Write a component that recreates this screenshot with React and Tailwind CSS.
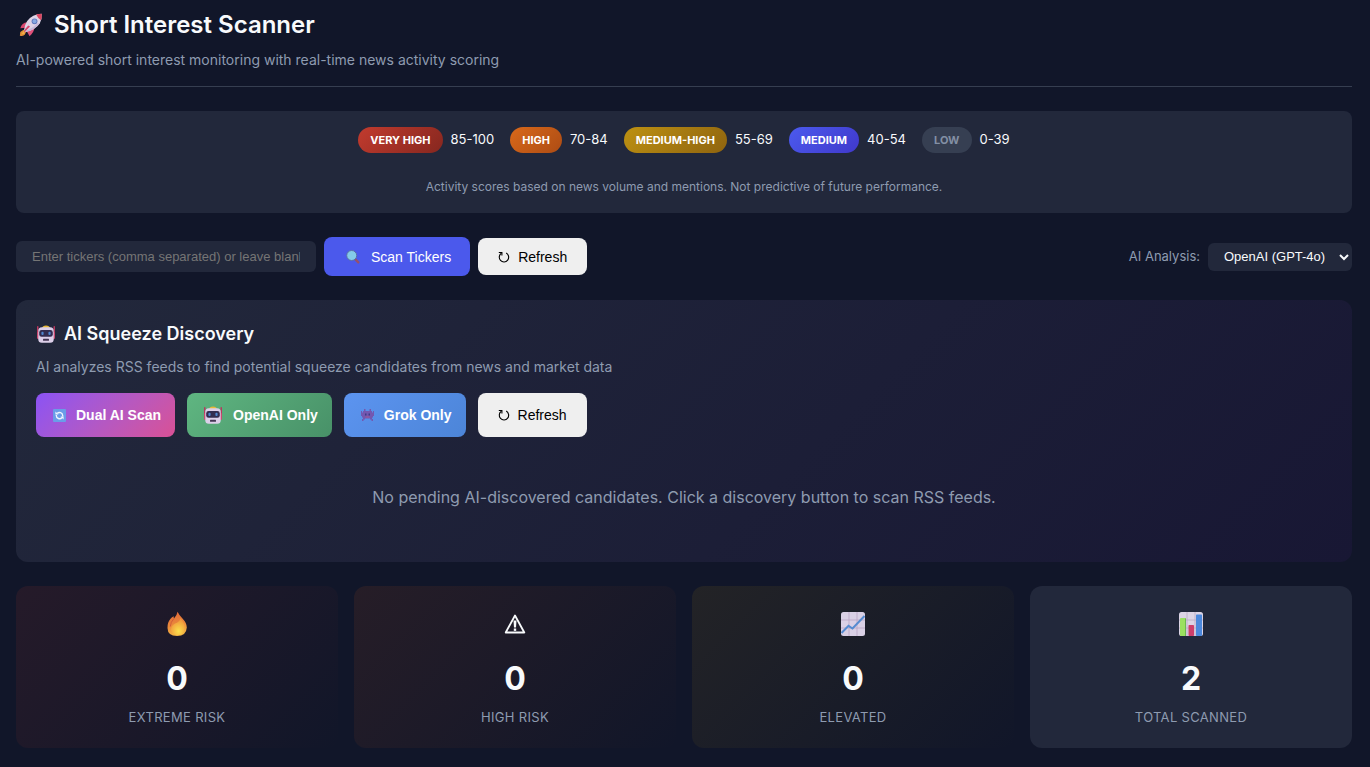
import React, { useState } from "react";

const legend = [
  { label: "VERY HIGH", range: "85-100", style: "bg-linear-135 from-[#c23b2e] to-[#86271f] text-white" },
  { label: "HIGH", range: "70-84", style: "bg-linear-135 from-[#d9691a] to-[#ad4c14] text-white" },
  { label: "MEDIUM-HIGH", range: "55-69", style: "bg-linear-135 from-[#bd9112] to-[#8f640f] text-white" },
  { label: "MEDIUM", range: "40-54", style: "bg-linear-135 from-[#4b5aee] to-[#4038cb] text-white" },
  { label: "LOW", range: "0-39", style: "bg-[#363f52] text-[#8390a5]" },
];

function RocketIcon({ className }) {
  return (
    <svg viewBox="0 0 28 28" className={className} aria-hidden="true">
      <path d="M6 19 L2.500 21.500 L2 25.500 Q6 26.500 7.500 24 L9 21Z" fill="#e39136" />
      <path d="M4 23.500 L7 20 L7 23.500Z" fill="#f5bd4d" />
      <path d="M10 11 Q4 11.500 2.500 17.500 L8.500 17Z" fill="#d9476f" />
      <path d="M17.500 16.500 Q17.500 22 12.500 26 L9 20Z" fill="#e0507a" />
      <path d="M6.500 19.500 Q7.500 8.500 16.500 4 Q21 2 25.500 2 Q26 7.500 23.500 12 Q18.500 19.500 8.500 21.500Z" fill="#ddd3e6" />
      <path d="M9 21.200 Q18.500 19 23.500 12 L21 12 Q15 18 7.500 20.500Z" fill="#c6b8d8" />
      <path d="M19.500 2.700 Q22 2 25.500 2 Q26 5.500 24.800 9 Q21.500 7 19.500 2.700Z" fill="#db4660" />
      <circle cx="17.800" cy="10" r="3.100" fill="#5f78bd" />
      <circle cx="17.800" cy="10" r="2.100" fill="#86a9e2" />
      <path d="M13 15.500 L6 22.500 Q7.500 17.500 11 14.500Z" fill="#d8446d" />
    </svg>
  );
}

function RobotIcon({ className }) {
  return (
    <svg viewBox="0 0 20 20" className={className} aria-hidden="true">
      <rect x="1" y="2" width="1.500" height="11" rx=".7" fill="#b9385f" />
      <rect x="17.500" y="2" width="1.500" height="11" rx=".7" fill="#b9385f" />
      <rect x="1" y="8" width="3" height="7" rx="1.200" fill="#c94b72" />
      <rect x="16" y="8" width="3" height="7" rx="1.200" fill="#c94b72" />
      <path d="M6 4 Q6.500 1.500 10 1.500 Q13.500 1.500 14 4Z" fill="#e6b93a" />
      <rect x="2.300" y="3.300" width="15.400" height="15.500" rx="3.500" fill="#dccfe9" />
      <rect x="3.200" y="6" width="13.600" height="6.800" rx="2.400" fill="#322c50" />
      <rect x="5.400" y="7.700" width="2.200" height="3.400" rx="1" fill="#4f86cf" />
      <rect x="12.400" y="7.700" width="2.200" height="3.400" rx="1" fill="#4f86cf" />
      <rect x="7" y="14.700" width="6" height="2" rx=".5" fill="#433553" />
    </svg>
  );
}

function SearchIcon({ className }) {
  return (
    <svg viewBox="0 0 20 20" className={className} aria-hidden="true">
      <path d="M12 12 L15.300 15.300" stroke="#96506c" strokeWidth="2.400" strokeLinecap="round" />
      <circle cx="8.700" cy="8.500" r="5" fill="#84cbe9" stroke="#5a70a8" strokeWidth="1" />
    </svg>
  );
}

function RefreshIcon({ className }) {
  return (
    <svg viewBox="0 0 12 12" className={className} fill="none" stroke="currentColor" aria-hidden="true">
      <path d="M8.200 2.100 A4.700 4.700 0 1 1 3.400 2.300" strokeWidth="1.100" />
      <path d="M.8 1.500 H3.900 V4.600" strokeWidth="1.100" />
    </svg>
  );
}

function SyncIcon({ className }) {
  return (
    <svg viewBox="0 0 18 18" className={className} fill="none" aria-hidden="true">
      <rect x="3" y="3" width="13" height="13" rx="1" fill="#6a9de8" />
      <path d="M6.300 9 V9.500 A3.200 3.200 0 0 0 12 11.500 M12.700 10.500 V9.500 A3.200 3.200 0 0 0 7.200 7.500" stroke="#eef4ff" strokeWidth="1.400" />
      <path d="M5.400 5.600 V8.600 H8.500Z M13.600 13.400 V10.400 H10.500Z" fill="#eef4ff" />
    </svg>
  );
}

function AlienIcon({ className }) {
  return (
    <svg viewBox="0 0 18 18" className={className} aria-hidden="true">
      <path
        d="M6 3H7.500V5H11.500V3H13V5H14V6.500H15V5H16V10H15V11.500H14V13H15V15H13.500V13.500H12V12.500H7V13.500H5.500V15H4V13H5V11.500H4V10H3V5H4V6.500H5V5H6Z"
        fill="#7357b0"
      />
      <path d="M7 7.500h1.500v2H7ZM10.500 7.500H12v2H10.500Z" fill="#3e3d86" />
      <path d="M7.500 10.500H11.500V11.500H7.500Z" fill="#a4588f" />
    </svg>
  );
}

function FireIcon({ className }) {
  return (
    <svg viewBox="0 0 26 26" className={className} aria-hidden="true">
      <defs>
        <linearGradient id="flame" x1="0" y1="0" x2="0.2" y2="1">
          <stop offset="0" stopColor="#e0633a" />
          <stop offset="0.6" stopColor="#ea8a3b" />
          <stop offset="1" stopColor="#f2b342" />
        </linearGradient>
        <radialGradient id="core" cx="0.55" cy="0.75" r="0.65">
          <stop offset="0" stopColor="#fbdf4c" />
          <stop offset="1" stopColor="#f09a3c" />
        </radialGradient>
      </defs>
      <path
        d="M13.500 .8 Q15 4 18.500 7.500 Q22.800 12 22.800 16.500 Q22.300 25 13 25 Q3.700 25 3.500 17 Q3.300 11.500 6.300 8 Q8 6 9.800 5.300 Q9.500 6.500 10 7.500 Q13 4.500 13.500 .8Z"
        fill="url(#flame)"
      />
      <path d="M16.500 7.500 Q21 12 20.700 17.500 Q20 24.300 13.500 24.300 Q7.300 24 7 18.500 Q7.200 14.500 11 12.500 Q15.500 11 16.500 7.500Z" fill="url(#core)" />
      <path d="M10 7.500 Q6.500 11 6.300 15.500" stroke="#cf5838" strokeWidth=".9" fill="none" />
    </svg>
  );
}

function WarningIcon({ className }) {
  return (
    <svg viewBox="0 0 26 26" className={className} fill="none" aria-hidden="true">
      <path d="M13 4.500 L22.300 21.500 H3.700Z" stroke="#f8fafc" strokeWidth="1.800" strokeLinejoin="round" />
      <path d="M11.500 9.500 H14.500 L14 16.500 H12Z" fill="#f8fafc" />
      <rect x="11.800" y="17.500" width="2.400" height="2.400" fill="#f8fafc" />
    </svg>
  );
}

function TrendIcon({ className }) {
  return (
    <svg viewBox="0 0 26 26" className={className} fill="none" aria-hidden="true">
      <rect x="1" y="1" width="24" height="24" rx="2.500" fill="#d9d0e5" />
      <path d="M9 1V25M17 1V25M1 9H25M1 17H25" stroke="#b9a5c4" strokeWidth=".8" />
      <path d="M1.500 22 L8.500 14.800 L12.500 17.500 L24.500 5" stroke="#558bd0" strokeWidth="2" />
    </svg>
  );
}

function BarsIcon({ className }) {
  return (
    <svg viewBox="0 0 26 26" className={className} fill="none" aria-hidden="true">
      <rect x="1" y="1" width="24" height="24" rx="2.500" fill="#dcd4e5" />
      <path d="M9 1V25M17 1V25M1 9H25M1 17H25" stroke="#baa9c4" strokeWidth=".8" />
      <rect x="2" y="7" width="6" height="18" rx=".7" fill="#9be060" />
      <path d="M7 7.500h1V25H7Z" fill="#6eb74f" />
      <rect x="10.500" y="14" width="5.500" height="11" rx=".7" fill="#ce3e6b" />
      <rect x="18" y="3.500" width="6" height="21.500" rx=".7" fill="#4c88dc" />
    </svg>
  );
}

const stats = [
  { icon: FireIcon, value: 0, label: "Extreme Risk", style: "bg-linear-135 from-[#251a29] to-[#111629]" },
  { icon: WarningIcon, value: 0, label: "High Risk", style: "bg-linear-135 from-[#261d27] to-[#111629]" },
  { icon: TrendIcon, value: 0, label: "Elevated", style: "bg-linear-135 from-[#232326] to-[#111629]" },
  { icon: BarsIcon, value: 2, label: "Total Scanned", style: "bg-[#22283b]" },
];

function RefreshButton({ className }) {
  return (
    <button
      type="button"
      className={`flex items-center gap-2 rounded-lg bg-[#efefef] px-5 font-['Liberation_Sans',sans-serif] text-sm text-black ${className}`}
    >
      <RefreshIcon className="size-3" />
      Refresh
    </button>
  );
}

export default function App() {
  const [tickers, setTickers] = useState("");
  const [model, setModel] = useState("openai");

  return (
    <div className="min-h-screen bg-[#111629] pb-5 pl-4 pr-[18px] pt-[9px] font-[Inter,sans-serif] text-slate-50">
      <header className="mb-6 border-b border-[#363e50] pb-4">
        <h1 className="flex items-center gap-2 text-2xl font-semibold">
          <RocketIcon className="size-[30px] p-0.5" />
          Short Interest Scanner
        </h1>
        <p className="mt-2 text-sm leading-[21px] text-[#8e9bb0]">
          AI-powered short interest monitoring with real-time news activity scoring
        </p>
      </header>

      <section className="mb-6 rounded-lg bg-[#22283b] p-4">
        <div className="flex flex-wrap justify-center gap-4">
          {legend.map((item) => (
            <div key={item.label} className="flex items-center gap-2">
              <span className={`rounded-full px-3 text-[11px] font-bold leading-[26px] ${item.style}`}>
                {item.label}
              </span>
              <span className="text-[13px]">{item.range}</span>
            </div>
          ))}
        </div>
        <p className="mt-6 text-center text-xs leading-5 text-[#8e9bb0]">
          Activity scores based on news volume and mentions. Not predictive of future performance.
        </p>
      </section>

      <div className="mb-6 flex items-center justify-between">
        <div className="flex items-center gap-2">
          <input
            type="text"
            aria-label="Tickers"
            value={tickers}
            onChange={(e) => setTickers(e.target.value)}
            placeholder="Enter tickers (comma separated) or leave blank for all"
            className="h-[31px] w-[300px] rounded-md bg-[#22283b] px-4 font-['Liberation_Sans',sans-serif] text-[13px] placeholder:text-[#757575]"
          />
          <button
            type="button"
            className="flex h-[39px] items-center gap-2 rounded-lg bg-[#4b59ec] px-[19px] font-['Liberation_Sans',sans-serif] text-sm text-white"
          >
            <SearchIcon className="size-5" />
            Scan Tickers
          </button>
          <RefreshButton className="h-[37px]" />
        </div>
        <div className="flex items-center gap-2">
          <label htmlFor="model" className="text-[13px] text-[#8e9bb0]">
            AI Analysis:
          </label>
          <select
            id="model"
            value={model}
            onChange={(e) => setModel(e.target.value)}
            className="h-7 w-36 rounded-md bg-[#22283b] pl-3 font-['Liberation_Sans',sans-serif] text-[13px] text-slate-50"
          >
            <option value="openai">OpenAI (GPT-4o)</option>
            <option value="grok">Grok</option>
          </select>
        </div>
      </div>

      <section className="mb-6 rounded-xl bg-linear-135 from-[#22283b] to-[#181734] p-5">
        <h2 className="flex items-center gap-2 text-lg font-semibold">
          <RobotIcon className="size-5" />
          AI Squeeze Discovery
        </h2>
        <p className="mt-2 text-sm leading-[21px] text-[#8e9bb0]">
          AI analyzes RSS feeds to find potential squeeze candidates from news and market data
        </p>
        <div className="mt-4 flex flex-wrap gap-3 font-['Liberation_Sans',sans-serif] text-sm">
          <button type="button" className="flex h-11 items-center gap-2 rounded-lg bg-linear-135 from-[#8b52f4] to-[#d95095] px-[14px] font-bold text-white">
            <SyncIcon className="size-[18px]" />
            Dual AI Scan
          </button>
          <button type="button" className="flex h-11 items-center gap-2 rounded-lg bg-linear-135 from-[#5fb681] to-[#489168] px-[14px] font-bold text-white">
            <RobotIcon className="size-6 p-0.5" />
            OpenAI Only
          </button>
          <button type="button" className="flex h-11 items-center gap-2 rounded-lg bg-linear-135 from-[#5c94f0] to-[#4c85d8] px-[14px] font-bold text-white">
            <AlienIcon className="size-[18px]" />
            Grok Only
          </button>
          <RefreshButton className="h-11" />
        </div>
        <p className="mt-4 p-8 text-center text-base leading-[25px] text-[#8e9bb0]">
          No pending AI-discovered candidates. Click a discovery button to scan RSS feeds.
        </p>
      </section>

      <section className="grid grid-cols-4 gap-4">
        {stats.map((stat) => (
          <div key={stat.label} className={`flex flex-col items-center rounded-xl px-6 pb-[23px] pt-[25px] ${stat.style}`}>
            <stat.icon className="size-[26px]" />
            <div className="mt-5 text-[32px] font-bold leading-[44px]">{stat.value}</div>
            <div className="mt-2 text-[13px] uppercase leading-4 tracking-wide text-[#8e9bb0]">{stat.label}</div>
          </div>
        ))}
      </section>
    </div>
  );
}
